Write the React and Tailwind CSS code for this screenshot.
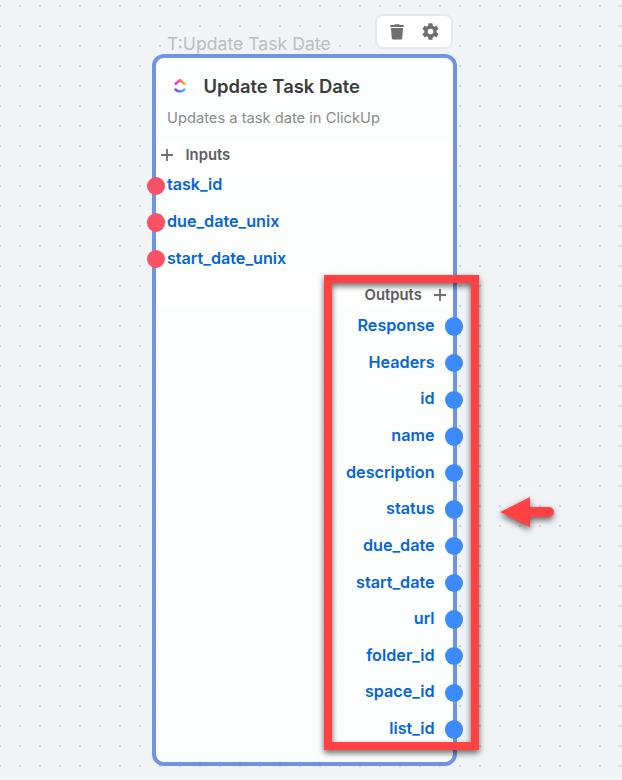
import React from "react";

const inputs = ["task_id", "due_date_unix", "start_date_unix"];
const outputs = [
  "Response", "Headers", "id", "name", "description", "status",
  "due_date", "start_date", "url", "folder_id", "space_id", "list_id",
];

function Plus() {
  return (
    <svg className="h-3 w-3 shrink-0" viewBox="0 0 12 12" stroke="#6f6f6f" strokeWidth="1.8">
      <path d="M6 0v12M0 6h12" />
    </svg>
  );
}

function Toolbar() {
  return (
    <div className="absolute left-[375px] top-[14px] flex h-[35px] w-[78px] items-center gap-[19px] rounded-[8px] border-2 border-[#e8e8e9] bg-white pl-[13px]">
      <svg className="h-[16px] w-[14px]" viewBox="0 0 14 16" fill="#6f6f6f">
        <path d="M0.3 1.1h3.7L5 0.2h4l1 .9h3.7v2H0.3z" />
        <path d="M1 4h12l-.7 10q-.1 1.6-1.8 1.6h-7q-1.7-.1-1.8-1.6z" />
      </svg>
      <svg className="-ml-px h-[17px] w-[17px]" viewBox="2 2 20 20" fill="#6f6f6f">
        <path d="M19.14 12.94c.04-.3.06-.61.06-.94 0-.32-.02-.64-.07-.94l2.03-1.58a.49.49 0 0 0 .12-.61l-1.92-3.32a.488.488 0 0 0-.59-.22l-2.39.96c-.5-.38-1.03-.7-1.62-.94l-.36-2.54a.484.484 0 0 0-.48-.41h-3.84c-.24 0-.43.17-.47.41l-.36 2.54c-.59.24-1.13.57-1.62.94l-2.39-.96c-.22-.08-.47 0-.59.22L2.74 8.87c-.12.21-.08.47.12.61l2.03 1.58c-.05.3-.09.63-.09.94s.02.64.07.94l-2.03 1.58a.49.49 0 0 0-.12.61l1.92 3.32c.12.22.37.29.59.22l2.39-.96c.5.38 1.03.7 1.62.94l.36 2.54c.05.24.24.41.48.41h3.84c.24 0 .44-.17.47-.41l.36-2.54c.59-.24 1.13-.56 1.62-.94l2.39.96c.22.08.47 0 .59-.22l1.92-3.32c.12-.22.07-.47-.12-.61zM12 15.3a3.3 3.3 0 1 1 0-6.6 3.3 3.3 0 0 1 0 6.6z" />
      </svg>
    </div>
  );
}

function ClickUpLogo() {
  return (
    <svg className="h-[15px] w-[12px] shrink-0" viewBox="0 0 12 15" fill="none" strokeWidth="2.5">
      <defs>
        <linearGradient id="warm" x1="0" x2="12" y1="0" y2="0" gradientUnits="userSpaceOnUse">
          <stop stopColor="#ff02f0" />
          <stop offset=".5" stopColor="#ff5f72" />
          <stop offset="1" stopColor="#ffc800" />
        </linearGradient>
        <linearGradient id="cool" x1="0" x2="12" y1="0" y2="0" gradientUnits="userSpaceOnUse">
          <stop stopColor="#8930fd" />
          <stop offset="1" stopColor="#49ccf9" />
        </linearGradient>
      </defs>
      <path d="M.9 5.4 6 1.2l5.1 4.2" stroke="url(#warm)" />
      <path d="M.9 9.8Q3 12.5 6 12.5t5.1-2.7" stroke="url(#cool)" />
    </svg>
  );
}

function Node() {
  return (
    <div className="absolute left-[152px] top-[53.6px] flex h-[712px] w-[304.8px] flex-col rounded-[12px] border-4 border-[#7094e2] bg-[#fdffff]/90 bg-clip-padding">
      <div className="flex h-[57px] shrink-0 items-center gap-[17.5px] pl-[18px]">
        <ClickUpLogo />
        <h1 className="text-[18.4px] font-semibold leading-6 text-[#3b3b3b]">Update Task Date</h1>
      </div>
      <p className="-mt-[7px] h-[33.5px] shrink-0 pl-[11px] text-[14.7px] leading-5 text-[#8a8a8a]">Updates a task date in ClickUp</p>
      <div className="flex h-[27.6px] shrink-0 items-center gap-[12.5px] bg-white pl-[5px]">
        <Plus />
        <span className="text-[14.8px] font-semibold leading-5 text-[#5c5c5c]">Inputs</span>
      </div>
      <ul className="-ml-[9.5px] shrink-0">
        {inputs.map((name) => (
          <li key={name} className="flex h-[36.7px] items-start gap-[2px]">
            <span className="mt-[8px] h-[18.4px] w-[18.4px] rounded-full bg-[#f65164]" />
            <span className="mt-[3.6px] text-[16.2px] font-semibold leading-6 text-[#0765d4]">{name}</span>
          </li>
        ))}
      </ul>
      <div className="flex h-[30.5px] shrink-0 items-center justify-end gap-[12.5px] bg-white pr-[6.5px] pt-[2.6px]">
        <span className="text-[14.8px] font-semibold leading-5 text-[#5c5c5c]">Outputs</span>
        <Plus />
      </div>
      <ul className="-mr-[10.5px] shrink-0">
        {outputs.map((name) => (
          <li key={name} className="flex h-[36.65px] items-start justify-end gap-[10.3px]">
            <span className="mt-[3.8px] text-[16.2px] font-semibold leading-6 text-[#0765d4]">{name}</span>
            <span className="mt-[8px] h-[18.4px] w-[18.4px] rounded-full bg-[#3d8bfa]" />
          </li>
        ))}
      </ul>
    </div>
  );
}

export default function App() {
  return (
    <main className="relative h-[780px] w-[622px] overflow-hidden bg-[#f0f4f7] font-['Inter',sans-serif]">
      <div className="absolute inset-0 bg-[conic-gradient(from_270deg_at_2px_2px,#c9d4df_90deg,transparent_0deg)] bg-[length:20px_20px] bg-[position:-1px_5px]" />
      <p className="absolute left-[167px] top-[32px] text-[17.65px] leading-6 text-[#bdbdbd]">T:Update Task Date</p>
      <Node />
      <Toolbar />
      <div className="absolute left-[324px] top-[275px] h-[475px] w-[155px] border-8 border-[#ff4141] drop-shadow-[0_3px_3px_rgba(0,0,0,0.6)]" />
      <svg className="absolute left-[500px] top-[496px] h-[32px] w-[56px] drop-shadow-[0_3px_3px_rgba(0,0,0,0.6)]" viewBox="0 0 56 32" fill="#ff4141">
        <path d="M.2 16 30 1v10h19a5 5 0 0 1 0 10H30v10z" />
      </svg>
    </main>
  );
}
